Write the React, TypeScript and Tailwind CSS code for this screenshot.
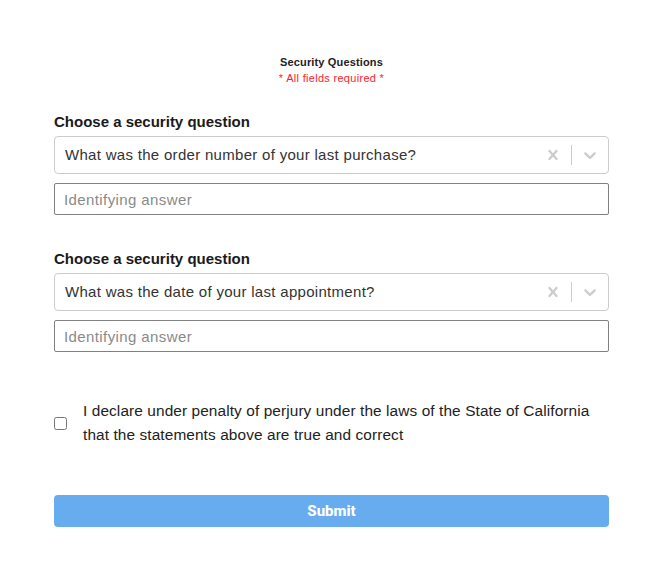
import React from "react";

const font = { fontFamily: "'Liberation Sans', Arial, sans-serif" };

function Cross() {
  return (
    <svg width="20" height="20" viewBox="0 0 20 20" fill="#cccccc" aria-hidden="true">
      <path d="M14.348 14.849c-0.469 0.469-1.229 0.469-1.697 0l-2.651-3.030-2.651 3.029c-0.469 0.469-1.229 0.469-1.697 0-0.469-0.469-0.469-1.229 0-1.697l2.758-3.15-2.759-3.152c-0.469-0.469-0.469-1.228 0-1.697s1.228-0.469 1.697 0l2.652 3.031 2.651-3.031c0.469-0.469 1.228-0.469 1.697 0s0.469 1.229 0 1.697l-2.758 3.152 2.758 3.15c0.469 0.469 0.469 1.229 0 1.698z" />
    </svg>
  );
}

function Chevron() {
  return (
    <svg width="20" height="20" viewBox="0 0 20 20" fill="#cccccc" aria-hidden="true">
      <path d="M4.516 7.548c0.436-0.446 1.043-0.481 1.576 0l3.908 3.747 3.908-3.747c0.533-0.481 1.141-0.446 1.574 0 0.436 0.445 0.408 1.197 0 1.615-0.406 0.418-4.695 4.502-4.695 4.502-0.217 0.223-0.502 0.335-0.787 0.335s-0.57-0.112-0.789-0.335c0 0-4.287-4.084-4.695-4.502s-0.436-1.17 0-1.615z" />
    </svg>
  );
}

function Question({ value }: { value: string }) {
  return (
    <div className="flex flex-col">
      <div className="text-[15px] font-bold text-[#1a1a1a] leading-[20px] mb-[4px]">Choose a security question</div>
      <div className="flex items-center h-[38px] border border-[#cccccc] rounded-[4px] bg-white">
        <div className="flex-1 pl-[10px] text-[15px] tracking-[0.3px] text-[#333333] truncate">{value}</div>
        <div className="flex items-center self-stretch">
          <div className="p-[8px] flex items-center"><Cross /></div>
          <span className="w-px self-stretch my-[8px] bg-[#cccccc]" />
          <div className="p-[8px] flex items-center"><Chevron /></div>
        </div>
      </div>
      <input
        className="mt-[9px] h-[32px] border border-[#808080] rounded-[2px] px-[9px] text-[15px] tracking-[0.4px] text-[#333] placeholder:text-[#8a8a8a] outline-none"
        style={font}
        placeholder="Identifying answer"
      />
    </div>
  );
}

export default function App() {
  return (
    <div className="min-h-[568px] bg-white pt-[54px] px-[54px]" style={font}>
      <div className="w-[555px] flex flex-col">
        <div className="text-center text-[11px] font-bold text-[#222] leading-[16px] tracking-[0.15px]">Security Questions</div>
        <div className="text-center text-[11px] text-[#ff1a2e] leading-[16px] tracking-[0.3px]">* All fields required *</div>
        <div className="mt-[26px]">
          <Question value="What was the order number of your last purchase?" />
        </div>
        <div className="mt-[34px]">
          <Question value="What was the date of your last appointment?" />
        </div>
        <label className="mt-[47px] flex items-center gap-[16px]">
          <input type="checkbox" className="w-[13px] h-[13px] shrink-0" />
          <span className="text-[15.4px] tracking-[0.1px] text-[#222] leading-[24px]">
            I declare under penalty of perjury under the laws of the State of California that the statements above are true and correct
          </span>
        </label>
        <button
          className="mt-[48px] h-[32px] w-full rounded-[4px] bg-[#66acee] text-white text-[15px] font-extrabold"
          style={{ fontFamily: "Roboto, sans-serif" }}
        >
          Submit
        </button>
      </div>
    </div>
  );
}
